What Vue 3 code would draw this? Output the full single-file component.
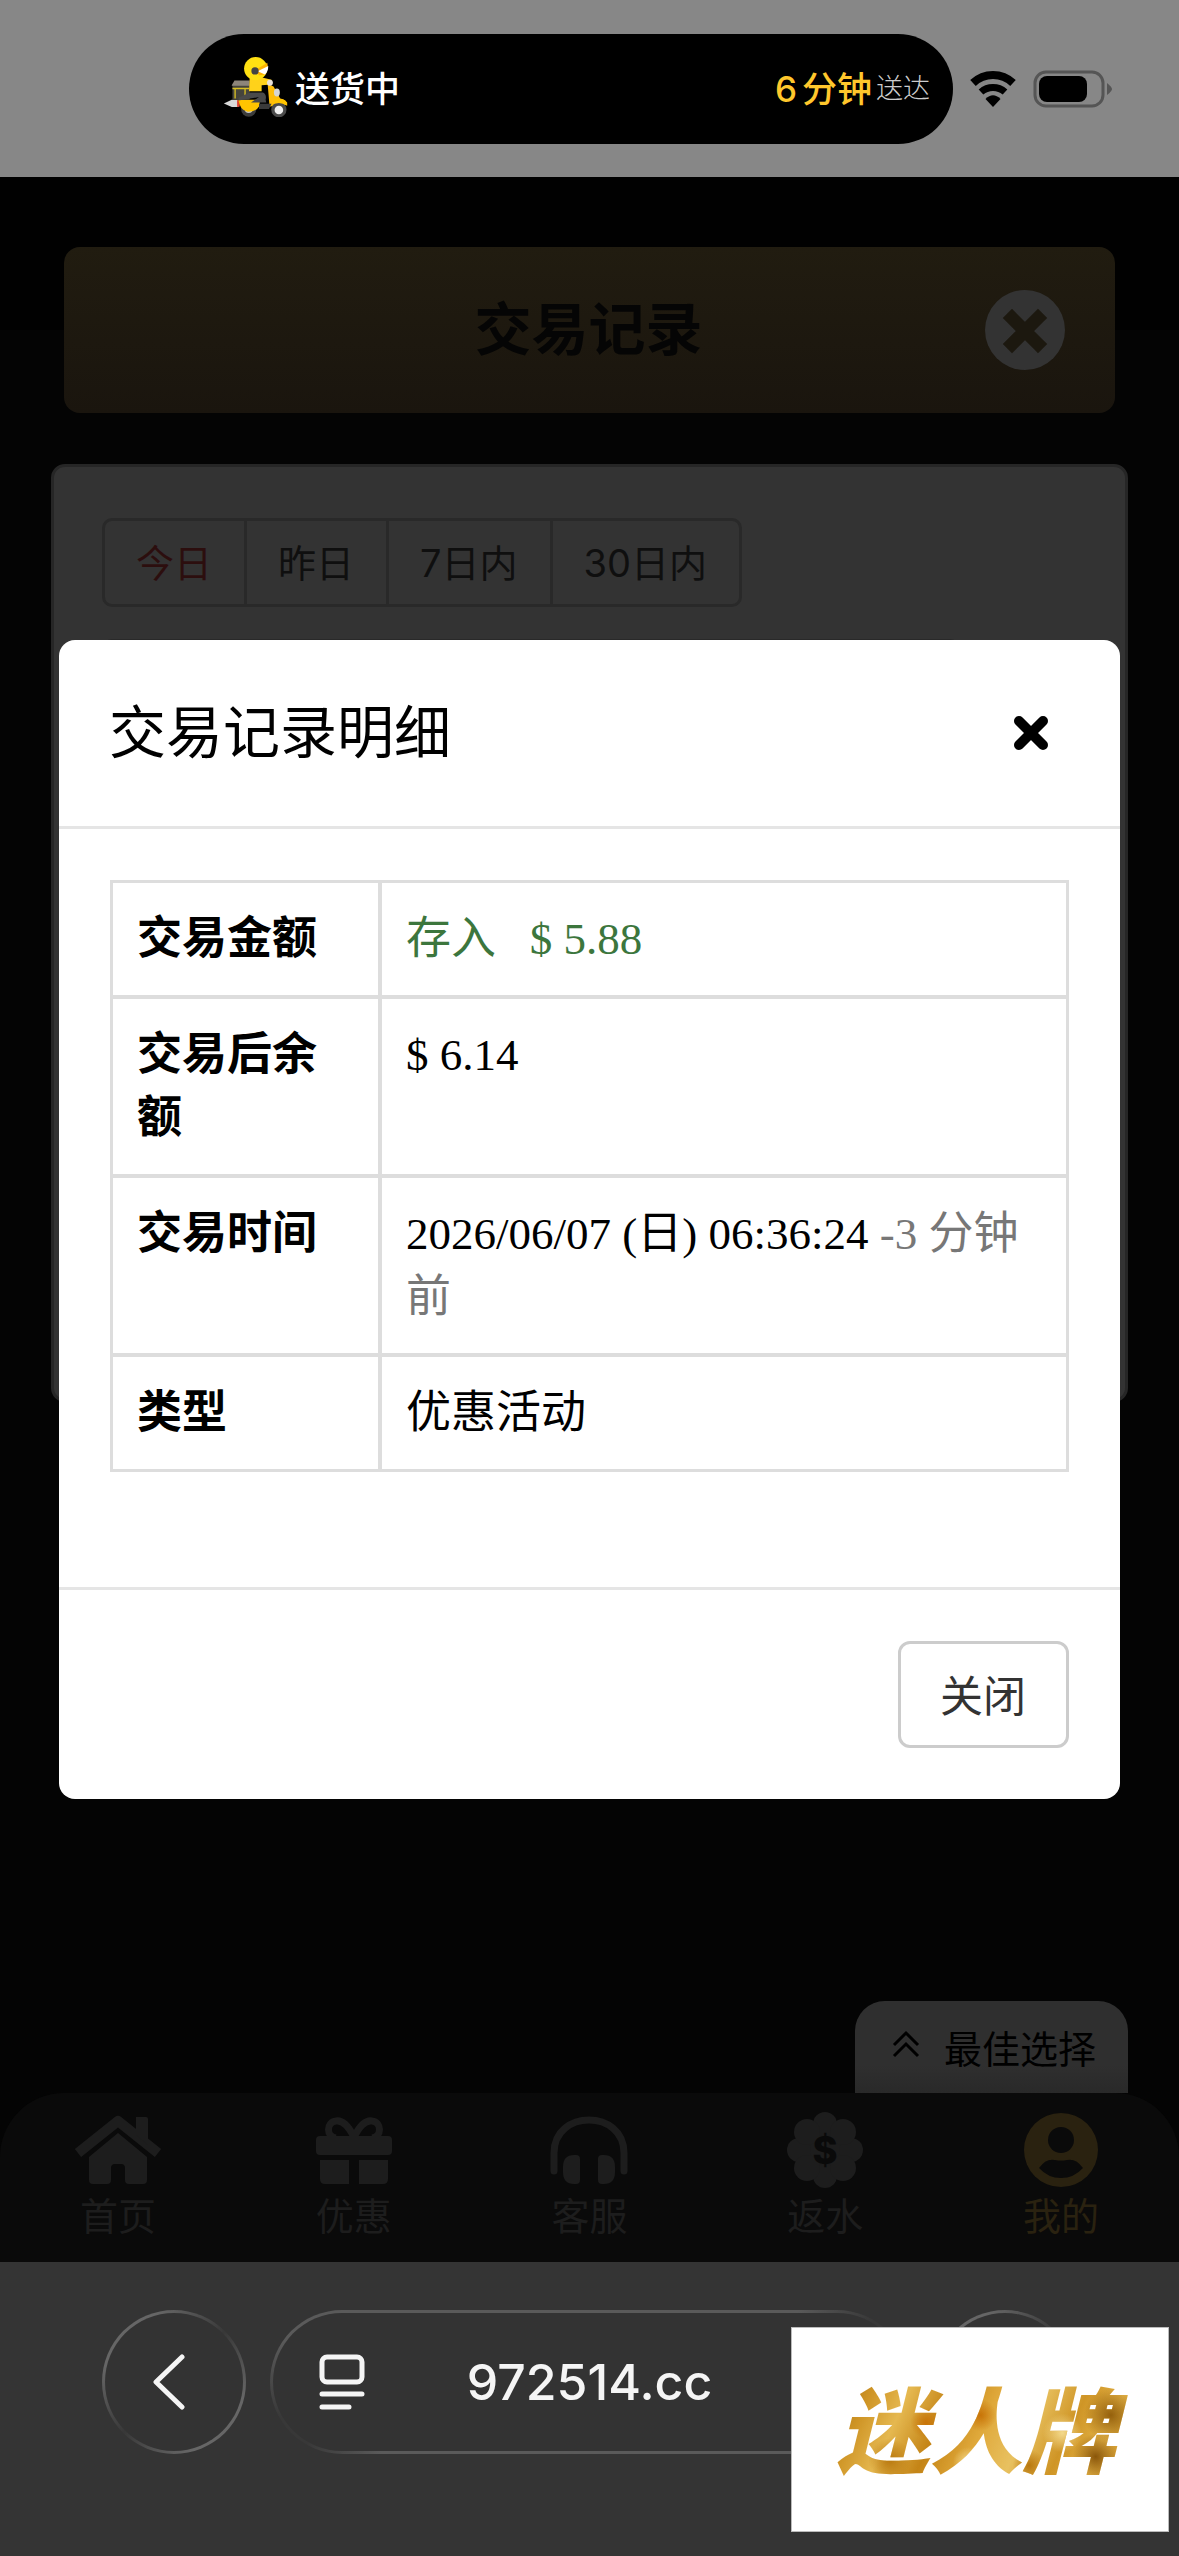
<template>
    <div class="screen">
        <header class="status-bar">
            <div class="island">
                <svg class="rider" viewBox="0 0 195 184" aria-hidden="true">
                    <path d="M2 143 L26 132 H46 V154 H26 Z" fill="#d9d9d9" />
                    <path d="M42 132 l8 4 v16 l-8 2z" fill="#e0412f" />
                    <circle cx="77" cy="160" r="23" fill="#3c3c3c" />
                    <circle cx="77" cy="160" r="12" fill="#c9c9c9" />
                    <path d="M46 132 H110 V150 Q100 168 74 168 Q50 164 46 132Z" fill="#ffc400" />
                    <rect x="28" y="82" width="52" height="50" rx="4" fill="#45443c" />
                    <path d="M26 88 L34 74 H80 V90 H26Z" fill="#8d857a" />
                    <path d="M36 98 V128 M66 98 V128 M28 98 H78" stroke="#d8be22" stroke-width="4" fill="none" />
                    <path d="M80 64 H114 L146 72 V86 L116 88 V106 H78 Z" fill="#ffd21a" />
                    <path d="M80 110 H120 Q132 116 128 132 L130 140 H84 L108 124 L46 134 V126Z" fill="#4a4a4a" />
                    <path d="M134 84 L152 92 L172 128 Q192 130 193 148 L160 150 L140 152 Z" fill="#ffbe0a" />
                    <path d="M108 144 H146 L138 160 H108Z" fill="#3a3a3a" />
                    <circle cx="141" cy="81" r="9" fill="#e8e0d8" />
                    <ellipse cx="162" cy="110" rx="9" ry="12" fill="#d5d5d5" />
                    <circle cx="168" cy="162" r="23" fill="#4a4a4a" />
                    <path d="M142 152 Q166 132 193 150 V140 Q180 126 160 130Z" fill="#ffc400" />
                    <circle cx="168" cy="163" r="13" fill="#f0f0f0" />
                    <circle cx="98" cy="38" r="35" fill="#ffe012" />
                    <path d="M98 42 L133 20 Q138 40 126 56 L108 58Z" fill="#ffb300" />
                    <path d="M104 46 L136 30 Q136 46 126 56 Z" fill="#fff" />
                    <circle cx="96" cy="45" r="11" fill="#444" />
                </svg>
                <span class="island-state">送货中</span>
                <span class="island-eta"><span>6</span><span>分钟</span></span>
                <span class="island-note">送达</span>
            </div>
            <svg class="wifi" viewBox="0 0 48 36" aria-hidden="true">
                <path d="M4 12 A29 29 0 0 1 44 12" fill="none" stroke="#000" stroke-width="8" />
                <path d="M12 21 A18 18 0 0 1 36 21" fill="none" stroke="#000" stroke-width="7" />
                <path d="M24 36 L16.500 28 Q24 20.500 31.500 28 Z" fill="#000" />
            </svg>
            <svg class="battery" viewBox="0 0 80 38" aria-hidden="true">
                <rect x="2" y="2" width="68" height="34" rx="11" fill="none" stroke="#555" stroke-width="3" />
                <rect x="6" y="6" width="48" height="26" rx="8" fill="#000" />
                <path d="M74 13 Q79 17 79 19 Q79 21 74 25Z" fill="#555" />
            </svg>
        </header>

        <div class="page">
            <main class="content">
                <div class="title-bar">
                    <h1>交易记录</h1>
                    <button class="round-close" type="button" aria-label="返回">
                        <svg viewBox="0 0 80 80" aria-hidden="true">
                            <circle cx="40" cy="40" r="40" fill="#333" />
                            <path d="M27 28 L53 54 M53 28 L27 54" stroke="#1c180f" stroke-width="13" stroke-linecap="square" />
                        </svg>
                    </button>
                </div>

                <section class="panel">
                    <div class="range-group">
                        <button
                            v-for="range in ranges"
                            :key="range"
                            type="button"
                            :class="{ active: range === activeRange }"
                            @click="activeRange = range"
                        >{{ range }}</button>
                    </div>
                    <div class="record-list"></div>
                </section>

                <button class="best-choice" type="button">
                    <svg viewBox="0 0 28 28" aria-hidden="true">
                        <path d="M2 15 L14 3 L26 15 M2 26 L14 14 L26 26" fill="none" stroke="#000" stroke-width="3" />
                    </svg>
                    <span>最佳选择</span>
                </button>
            </main>

            <nav class="tab-bar">
                <a href="#home">
                    <svg viewBox="0 0 88 78" aria-hidden="true">
                        <path d="M4 42 L44 10 L84 42" fill="none" stroke="currentColor" stroke-width="10" stroke-linejoin="round" />
                        <path d="M62 6 h10 q2 0 2 2 V34 L62 24Z" fill="currentColor" />
                        <path d="M44 22 L73 46 V69 q0 4 -4 4 H55 q-4 0 -4 -4 V57 q0 -4 -4 -4 H41 q-4 0 -4 4 V69 q0 4 -4 4 H19 q-4 0 -4 -4 V46Z" fill="currentColor" />
                    </svg>
                    <span>首页</span>
                </a>
                <a href="#promo">
                    <svg viewBox="0 0 88 78" aria-hidden="true">
                        <path d="M44 26 C38 14 32 9 26 10 C16 11 16 26 26 27 M44 26 C50 14 56 9 62 10 C72 11 72 26 62 27" fill="none" stroke="currentColor" stroke-width="7" />
                        <rect x="6" y="25" width="76" height="19" rx="4" fill="currentColor" />
                        <path d="M10 49 H39 V73 H15 q-5 0 -5 -5Z M49 49 H78 V68 q0 5 -5 5 H49Z" fill="currentColor" />
                    </svg>
                    <span>优惠</span>
                </a>
                <a href="#service">
                    <svg viewBox="0 0 88 78" aria-hidden="true">
                        <path d="M9 60 V42 C9 -2 79 -2 79 42 V60" fill="none" stroke="currentColor" stroke-width="7" stroke-linecap="round" />
                        <path d="M29 44 H31 q4 0 4 4 V69 q0 4 -4 4 H29 q-11 0 -11 -12 V56 q0 -12 11 -12Z M59 44 H57 q-4 0 -4 4 V69 q0 4 4 4 H59 q11 0 11 -12 V56 q0 -12 -11 -12Z" fill="currentColor" />
                    </svg>
                    <span>客服</span>
                </a>
                <a href="#rebate">
                    <svg viewBox="0 0 88 78" aria-hidden="true">
                        <g fill="currentColor">
                            <circle cx="44" cy="39" r="29" />
                            <circle cx="44" cy="13" r="12" />
                            <circle cx="44" cy="65" r="12" />
                            <circle cx="18" cy="39" r="12" />
                            <circle cx="70" cy="39" r="12" />
                            <circle cx="26" cy="21" r="13" />
                            <circle cx="62" cy="21" r="13" />
                            <circle cx="26" cy="57" r="13" />
                            <circle cx="62" cy="57" r="13" />
                        </g>
                        <text x="44" y="53" class="coin">$</text>
                    </svg>
                    <span>返水</span>
                </a>
                <a href="#mine" class="current">
                    <svg viewBox="0 0 88 78" aria-hidden="true">
                        <circle cx="44" cy="39" r="37" fill="currentColor" />
                        <circle cx="44" cy="29" r="13" fill="#0a0a0a" />
                        <path d="M22 57 Q29 47 38 49 Q44 50 50 49 Q59 47 66 57 Q57 67 44 67 Q31 67 22 57Z" fill="#0a0a0a" />
                    </svg>
                    <span>我的</span>
                </a>
            </nav>

            <div v-if="dialogOpen" class="dialog-layer">
                <div class="dialog" role="dialog" aria-labelledby="dialog-title">
                    <div class="dialog-header">
                        <h2 id="dialog-title">交易记录明细</h2>
                        <button class="dialog-x" type="button" aria-label="关闭" @click="dialogOpen = false">
                            <svg viewBox="0 0 36 36" aria-hidden="true">
                                <path d="M6 6 L30 30 M30 6 L6 30" stroke="#000" stroke-width="10" stroke-linecap="round" />
                            </svg>
                        </button>
                    </div>
                    <div class="dialog-body">
                        <table>
                            <tbody>
                                <tr>
                                    <th scope="row">交易金额</th>
                                    <td class="income">存入&nbsp;&nbsp; $ 5.88</td>
                                </tr>
                                <tr>
                                    <th scope="row">交易后余额</th>
                                    <td>$ 6.14</td>
                                </tr>
                                <tr>
                                    <th scope="row">交易时间</th>
                                    <td>2026/06/07 (日) 06:36:24 <span class="muted">-3 分钟前</span></td>
                                </tr>
                                <tr>
                                    <th scope="row">类型</th>
                                    <td>优惠活动</td>
                                </tr>
                            </tbody>
                        </table>
                    </div>
                    <div class="dialog-footer">
                        <button type="button" @click="dialogOpen = false">关闭</button>
                    </div>
                </div>
            </div>
        </div>

        <footer class="browser-bar">
            <button class="round-button" type="button" aria-label="后退">
                <svg class="back" viewBox="0 0 34 56" aria-hidden="true">
                    <path d="M30 3 L4 28 L30 53" fill="none" stroke="#f5f5f5" stroke-width="5" stroke-linecap="round" stroke-linejoin="round" />
                </svg>
            </button>
            <div class="address">
                <svg class="reader" viewBox="0 0 46 56" aria-hidden="true">
                    <g fill="none" stroke="#f5f5f5" stroke-width="5" stroke-linecap="round">
                        <rect x="3" y="3" width="40" height="25" rx="5" />
                        <path d="M3 40 H43 M3 53 H30" />
                    </g>
                </svg>
                <input type="text" v-model="address" aria-label="网址" />
            </div>
            <button class="round-button" type="button" aria-label="更多"></button>
            <div class="brand">
                <span>迷人牌</span>
            </div>
        </footer>
    </div>
</template>


<script setup>
import { ref } from 'vue';

const ranges = ['今日', '昨日', '7日内', '30日内'];
const activeRange = ref('今日');
const dialogOpen = ref(true);
const address = ref('972514.cc');
</script>

<style>
body {
    margin: 0;
    background-color: #343434;
}
</style>

<style scoped>
.screen {
    --sans: Inter, "Noto Sans CJK SC", sans-serif;
    --serif: "Liberation Serif", "Noto Sans CJK SC", serif;
    display: flex;
    flex-direction: column;
    min-height: 100vh;
    font-family: var(--sans);
}

.screen *,
.screen {
    box-sizing: border-box;
}

button {
    margin: 0;
    padding: 0;
    border: 0;
    background: none;
    font-family: inherit;
    cursor: pointer;
}

svg {
    display: block;
    flex: none;
}

/* 状态栏 */
.status-bar {
    display: flex;
    align-items: center;
    height: 177px;
    padding: 0 66px 0 189px;
    background-color: #878787;
}

.island {
    display: flex;
    flex: 1;
    align-items: center;
    height: 110px;
    padding: 0 23px 0 34px;
    border-radius: 55px;
    background-color: #000;
    color: #fff;
    font-size: 35px;
    font-weight: 500;
    line-height: 50px;
    white-space: nowrap;
}

.rider {
    width: 65px;
    height: 61px;
    margin: 0 7px 4px 0;
}

.island-eta {
    display: flex;
    gap: 5px;
    margin-left: auto;
    color: #ffc72c;
}

.island-note {
    margin-left: 4px;
    color: #ccc;
    font-size: 27px;
    font-weight: 300;
}

.wifi {
    width: 48px;
    height: 36px;
    margin-left: 16px;
}

.battery {
    width: 80px;
    height: 38px;
    margin-left: 16px;
}

/* 页面 */
.page {
    position: relative;
    display: flex;
    flex: 1;
    flex-direction: column;
    background: linear-gradient(#010101 153px, #040404 153px);
}

.content {
    display: flex;
    flex: 1;
    flex-direction: column;
    padding: 70px 51px 0;
}

.title-bar {
    display: flex;
    align-items: center;
    height: 166px;
    margin: 0 13px;
    padding: 0 50px 0 128px;
    border-radius: 16px;
    background: linear-gradient(#211c10, #1a150e);
}

.title-bar h1 {
    flex: 1;
    margin: 0;
    color: #050505;
    font-size: 57px;
    font-weight: 700;
    line-height: 80px;
    text-align: center;
}

.round-close,
.round-close svg {
    width: 80px;
    height: 80px;
}

.panel {
    min-height: 938px;
    margin-top: 51px;
    padding: 51px 48px;
    border: 3px solid #262626;
    border-radius: 14px;
    background-color: #333;
}

.range-group {
    display: inline-flex;
    border: 3px solid #292929;
    border-radius: 10px;
}

.range-group button {
    height: 83px;
    padding: 0 32px 4px 31px;
    color: #0f0f0f;
    font-size: 38px;
}

.range-group button + button {
    border-left: 3px solid #292929;
}

.range-group .active {
    color: #2c0e0e;
}

.record-list {
    width: 88%;
    height: 89px;
    margin-top: 32px;
    border: 3px solid #292929;
    border-radius: 10px;
}

.best-choice {
    display: flex;
    align-items: center;
    align-self: flex-end;
    gap: 24px;
    height: 92px;
    margin-top: auto;
    padding: 0 32px 2px 37px;
    border-radius: 30px 30px 0 0;
    background: linear-gradient(#2f2f2f 70%, #292929);
    color: #000;
    font-size: 38px;
}

.best-choice svg {
    width: 28px;
    height: 28px;
    margin-bottom: 4px;
}

.tab-bar {
    display: grid;
    grid-template-columns: repeat(5, 1fr);
    height: 169px;
    padding-top: 18px;
    border-radius: 64px 64px 0 0;
    background-color: #0a0a0a;
}

.tab-bar a {
    display: flex;
    flex-direction: column;
    align-items: center;
    color: #1d1d1d;
    font-size: 38px;
    line-height: 54px;
    text-decoration: none;
}

.tab-bar svg {
    width: 88px;
    height: 78px;
}

.tab-bar .current {
    color: #2a2210;
}

.coin {
    fill: #0a0a0a;
    font-size: 38px;
    font-weight: 800;
    text-anchor: middle;
}

/* 弹窗 */
.dialog-layer {
    position: absolute;
    inset: 0;
    display: flex;
    align-items: center;
    justify-content: center;
}

.dialog {
    width: 90%;
    border-radius: 16px;
    background-color: #fff;
    color: #000;
}

.dialog-header {
    display: flex;
    align-items: center;
    justify-content: space-between;
    height: 189px;
    padding: 0 71px 0 50px;
    border-bottom: 3px solid #e5e5e5;
}

.dialog-header h2 {
    margin: 0;
    font-size: 57px;
    font-weight: 400;
    line-height: 80px;
}

.dialog-x svg {
    width: 36px;
    height: 36px;
}

.dialog-body {
    padding: 51px 51px 115px;
}

table {
    width: 100%;
    border: 3px solid #ddd;
    border-spacing: 0;
    table-layout: fixed;
    font-family: var(--serif);
    font-size: 45px;
    line-height: 63px;
}

th,
td {
    padding: 25px 24px 24px;
    border-bottom: 4px solid #ddd;
    text-align: left;
    vertical-align: top;
}

th {
    width: 269px;
    border-right: 4px solid #ddd;
    font-weight: 700;
}

tr:last-child th,
tr:last-child td {
    border-bottom: 0;
}

.income {
    color: #3c763d;
}

.muted {
    color: #777;
}

.dialog-footer {
    display: flex;
    justify-content: flex-end;
    padding: 51px;
    border-top: 3px solid #e5e5e5;
}

.dialog-footer button {
    height: 107px;
    padding: 0 40px 4px 39px;
    border: 3px solid #ccc;
    border-radius: 12px;
    color: #333;
    font-size: 43px;
}

/* 浏览器底栏 */
.browser-bar {
    position: relative;
    display: flex;
    gap: 24px;
    height: 294px;
    padding: 48px 102px 0;
    background-color: #343434;
}

.round-button {
    display: flex;
    flex: none;
    align-items: center;
    justify-content: center;
    width: 144px;
    height: 144px;
    border: 3px solid transparent;
    border-radius: 50%;
    background:
        linear-gradient(#333, #333) padding-box,
        linear-gradient(135deg, #666 20%, #383838 50%, #666 80%) border-box;
}

.back {
    width: 34px;
    height: 56px;
    margin-right: 10px;
}

.address {
    display: flex;
    flex: 1;
    align-items: center;
    min-width: 0;
    height: 144px;
    padding: 0 92px 0 46px;
    border: 3px solid transparent;
    border-radius: 72px;
    background:
        linear-gradient(#333, #333) padding-box,
        radial-gradient(circle 90px at 24px 120px, #383838 20%, transparent) border-box,
        radial-gradient(circle 90px at calc(100% - 24px) 24px, #383838 20%, transparent) border-box,
        linear-gradient(#5a5a5a, #5a5a5a) border-box;
}

.reader {
    width: 46px;
    height: 56px;
}

.address input {
    flex: 1;
    min-width: 0;
    padding: 0;
    border: 0;
    outline: 0;
    background: none;
    color: #f5f5f5;
    font-family: inherit;
    font-size: 50px;
    font-weight: 500;
    text-align: center;
}

/* 角标压在底栏之上 */
.brand {
    position: absolute;
    right: 10px;
    bottom: 24px;
    display: flex;
    align-items: center;
    justify-content: center;
    width: 378px;
    height: 205px;
    border: 1px solid #bbb;
    background-color: #fff;
}

.brand span {
    padding: 0 16px 8px 8px;
    background:
        radial-gradient(circle at 32% 45%, #c87408 0, transparent 7%),
        radial-gradient(circle at 20% 70%, #b8780f 0, transparent 8%),
        radial-gradient(circle at 50% 40%, #c87408 0, transparent 9%),
        radial-gradient(circle at 46% 72%, #f3d98c 0, transparent 8%),
        radial-gradient(circle at 66% 74%, #b8780f 0, transparent 7%),
        radial-gradient(circle at 77% 52%, #f3d98c 0, transparent 8%),
        radial-gradient(circle at 93% 40%, #94600c 0, transparent 9%),
        radial-gradient(circle at 88% 68%, #8a560a 0, transparent 8%),
        linear-gradient(115deg, #a86c0c 4%, #cf9526 16%, #e5b850 26%, #c48416 38%, #dfa83a 50%, #e8c160 62%, #cf9526 74%, #e2b146 84%, #b8780f);
    background-clip: text;
    -webkit-background-clip: text;
    color: transparent;
    font-family: "Noto Sans CJK SC", sans-serif;
    font-size: 93px;
    font-style: italic;
    font-weight: 900;
    line-height: 140px;
    white-space: nowrap;
}
</style>
